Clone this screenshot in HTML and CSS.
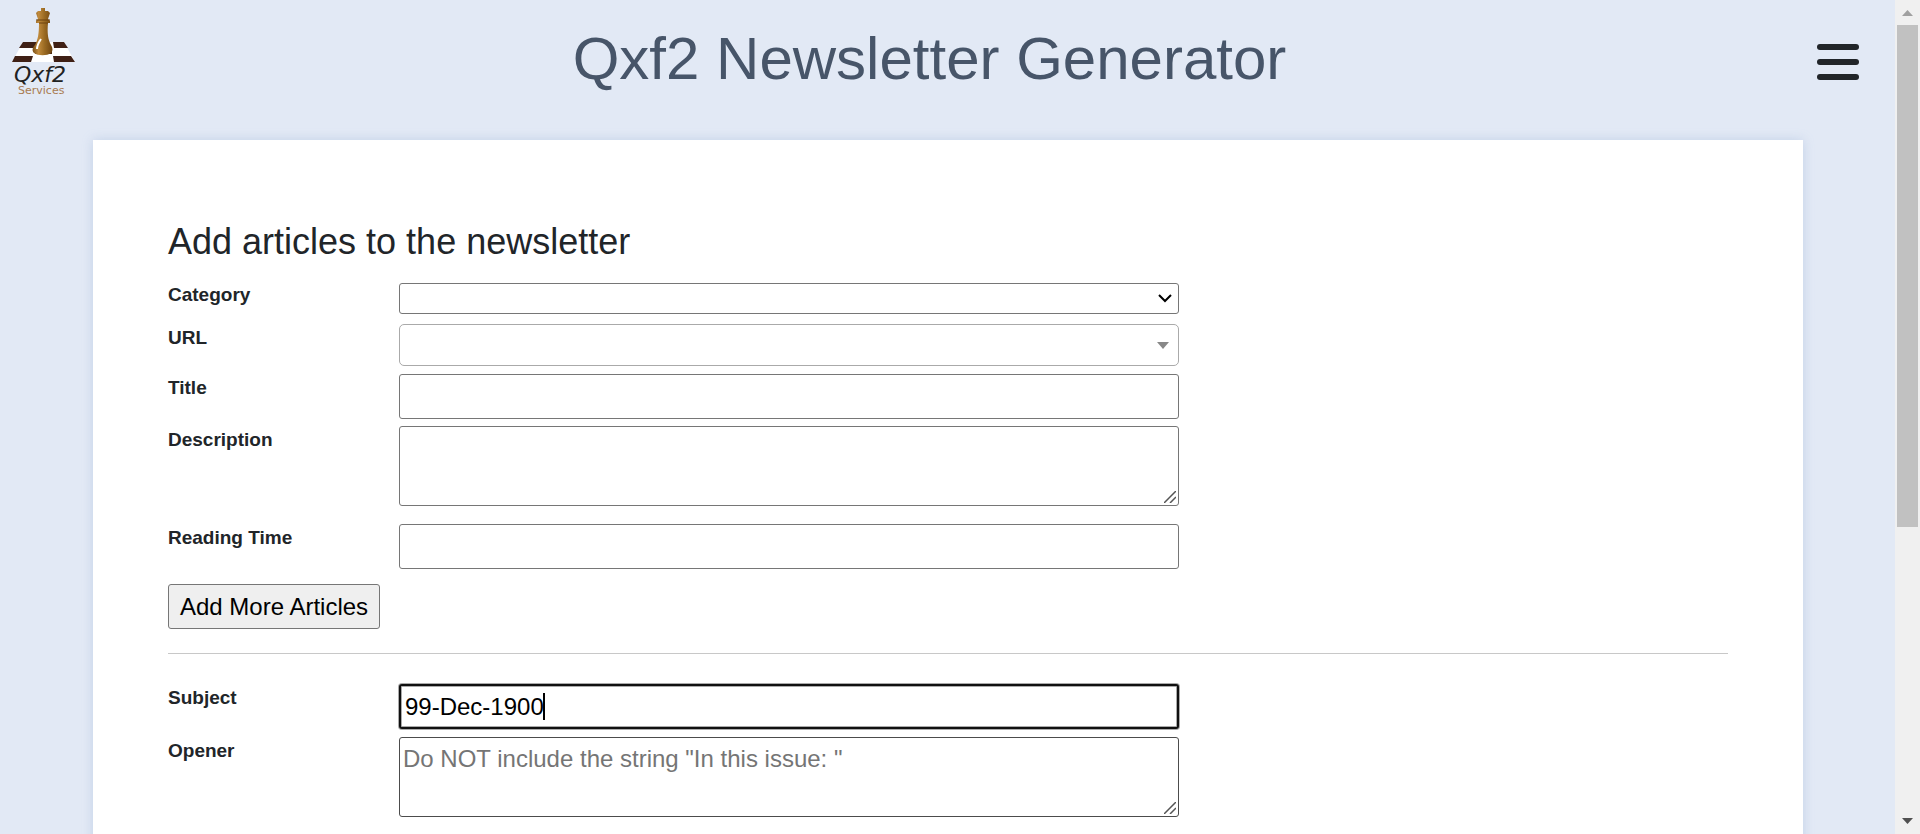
FILE: index.html
```html
<!DOCTYPE html>
<html lang="en">
<head>
<meta charset="utf-8">
<title>Qxf2 Newsletter Generator</title>
<link rel="stylesheet" href="styles.css">
</head>
<body>
<div class="window">
  <div class="page">
    <header class="header">
      <a class="logo" href="#" aria-label="Qxf2 Services">
        <svg width="68" height="92" viewBox="10 6 68 92">
          <defs>
            <linearGradient id="wood" x1="0" x2="1"><stop offset="0" stop-color="#7a4f16"/><stop offset=".3" stop-color="#c08a3c"/><stop offset=".6" stop-color="#9a6a22"/><stop offset="1" stop-color="#6d430f"/></linearGradient>
          </defs>
          <path d="M23 42H64L75 62H12Z" fill="#fff"/>
          <path d="M23 42H37L35 48H19ZM53 42H64L68 48H54ZM15 56H33L31 62H12ZM53 56H71L75 62H54Z" fill="#3f2015"/>
          <path d="M37 42H53V48H37Z" fill="#fff"/>
          <path d="M35 48H52V54H35Z" fill="#4b2a14"/>
          <path d="M41 8H45V11H48L50 13L48 19L50 21V23H48C47 33 48 40 51 45C53 48 53 51 51 53C47 56 38 56 34 53C32 51 32 48 35 45C38 40 39 33 39 23H36V21L38 19L36 13L38 11H41Z" fill="url(#wood)"/>
          <path d="M41 39C39 42 37 45 37 49" fill="none" stroke="#fff" stroke-width="2"/>
          <path d="M36 20H50M39 23H48" stroke="#6d430f" stroke-width="1"/>
          <text class="logo-name" x="14" y="82">Qxf2</text>
          <text class="logo-sub" x="18" y="94">Services</text>
        </svg>
      </a>
      <h1 class="title">Qxf2 Newsletter Generator</h1>
      <button class="menu" type="button" aria-label="Menu"><span></span><span></span><span></span></button>
    </header>
    <main class="card">
      <form>
        <h2 class="heading">Add articles to the newsletter</h2>
        <div class="row row-category">
          <label for="category">Category</label>
          <div class="field">
            <select id="category" class="control category"><option></option></select>
            <svg class="chevron" width="14" height="9" viewBox="0 0 14 9"><path d="M1 1L7 7L13 1" fill="none" stroke="#000" stroke-width="2"/></svg>
          </div>
        </div>
        <div class="row">
          <label for="url">URL</label>
          <div class="field">
            <select id="url" class="control url"><option></option></select>
            <svg class="triangle" width="12" height="7" viewBox="0 0 12 7"><path d="M0 0H12L6 7Z" fill="#888"/></svg>
          </div>
        </div>
        <div class="row row-title">
          <label for="title">Title</label>
          <div class="field"><input id="title" class="control" type="text"></div>
        </div>
        <div class="row row-description">
          <label for="description">Description</label>
          <div class="field">
            <textarea id="description" class="control"></textarea>
            <svg class="grip" width="12" height="12" viewBox="0 0 12 12"><path d="M0 12L12 0M6 12L12 6" stroke="#555" stroke-width="1.5"/></svg>
          </div>
        </div>
        <div class="row">
          <label for="reading">Reading Time</label>
          <div class="field"><input id="reading" class="control" type="text"></div>
        </div>
        <button class="add" type="button">Add More Articles</button>
        <hr class="rule">
        <div class="row">
          <label for="subject">Subject</label>
          <div class="field">
            <input id="subject" class="control active" type="text" value="99-Dec-1900">
            <span class="caret"></span>
          </div>
        </div>
        <div class="row">
          <label for="opener">Opener</label>
          <div class="field">
            <textarea id="opener" class="control dark" placeholder="Do NOT include the string &quot;In this issue: &quot;"></textarea>
            <svg class="grip" width="12" height="12" viewBox="0 0 12 12"><path d="M0 12L12 0M6 12L12 6" stroke="#555" stroke-width="1.5"/></svg>
          </div>
        </div>
      </form>
    </main>
  </div>
  <div class="scrollbar" aria-hidden="true">
    <svg class="arrow" width="11" height="6" viewBox="0 0 11 6"><path d="M0 6L5.5 0L11 6Z" fill="#a0a0a0"/></svg>
    <div class="track"><div class="thumb"></div></div>
    <svg class="arrow" width="11" height="6" viewBox="0 0 11 6"><path d="M0 0L5.5 6L11 0Z" fill="#505050"/></svg>
  </div>
</div>
</body>
</html>
```
FILE: styles.css
```css
* { box-sizing: border-box; }
body {
  margin: 0;
  font-family: "Liberation Sans", Arial, sans-serif;
  font-size: 20px;
  line-height: 30px;
  color: #212529;
}
.window { display: flex; height: 100vh; }
.page {
  flex: 1;
  min-width: 0;
  overflow: hidden;
  background: #e2e9f5;
}

.header {
  display: flex;
  align-items: flex-start;
  height: 140px;
  padding: 6px 36px 0 10px;
}
.logo { display: block; }
.logo svg { display: block; }
.logo-name { font: italic 22px "DejaVu Sans", sans-serif; fill: #222; }
.logo-sub { font: 11px "DejaVu Sans", sans-serif; fill: #a97b50; }
.title {
  flex: 1;
  margin: 17px 0 0;
  font-size: 60px;
  line-height: 72px;
  font-weight: 400;
  text-align: center;
  color: #475569;
}
.menu {
  display: flex;
  flex-direction: column;
  gap: 9px;
  margin-top: 38px;
  padding: 0 0 0 36px;
  border: 0;
  background: none;
}
.menu span { width: 42px; height: 6px; border-radius: 3px; background: #212529; }

.card {
  min-height: 100vh;
  margin: 0 92px 0 93px;
  padding: 80px 75px;
  background: #fff;
  box-shadow: 0 0 10px rgba(150, 175, 215, 0.4);
}
.heading {
  margin: 0 0 18px;
  font-size: 36px;
  line-height: 43px;
  font-weight: 400;
}
.row { display: flex; margin-bottom: 8px; }
.row label { flex: 0 0 231px; font-size: 19px; line-height: 28px; font-weight: 700; }
.field { position: relative; width: 50%; }
.row-category { margin-bottom: 10px; }
.row-category .field { padding-top: 2px; }
.row-title { margin-bottom: 7px; }
.row-description { margin-bottom: 18px; }

.control {
  display: block;
  width: 100%;
  height: 45px;
  margin: 0;
  padding: 0 4px;
  border: 1px solid #767676;
  border-radius: 3px;
  background: #fff;
  color: #000;
  font: 24px/36px "Liberation Sans", Arial, sans-serif;
  appearance: none;
}
textarea.control { height: 80px; padding: 3px; resize: none; }
.control.category { height: 31px; }
.control.url { height: 42px; border-color: #aaa; border-radius: 5px; }
.control.dark { border-color: #4c4c4c; }
.control.active {
  padding: 0 4px;
  border: 2px solid #101010;
  box-shadow: 0 0 0 1px #aaa, inset 0 0 0 1px #aaa;
}
.control::placeholder { color: #757575; opacity: 1; }

.chevron, .triangle, .grip, .caret { position: absolute; pointer-events: none; }
.chevron { right: 7px; top: 13px; }
.triangle { right: 10px; top: 18px; }
.grip { right: 3px; bottom: 3px; }
.caret { left: 144px; top: 9px; width: 2px; height: 27px; background: #000; }

.add {
  display: block;
  height: 45px;
  margin-top: 15px;
  padding: 0 11px;
  border: 1px solid #767676;
  border-radius: 3px;
  background: #efefef;
  color: #000;
  font: 24px "Liberation Sans", Arial, sans-serif;
}
.rule { margin: 24px 0 30px; border: 0; border-top: 1px solid #c8c8c8; }

.scrollbar {
  display: flex;
  flex-direction: column;
  align-items: center;
  width: 25px;
  padding: 10px 0;
  background: #f0f0f0;
}
.arrow { display: block; flex: none; }
.track { flex: 1; width: 21px; padding: 9px 0; }
.thumb { height: 64%; background: #c1c1c1; }
```
